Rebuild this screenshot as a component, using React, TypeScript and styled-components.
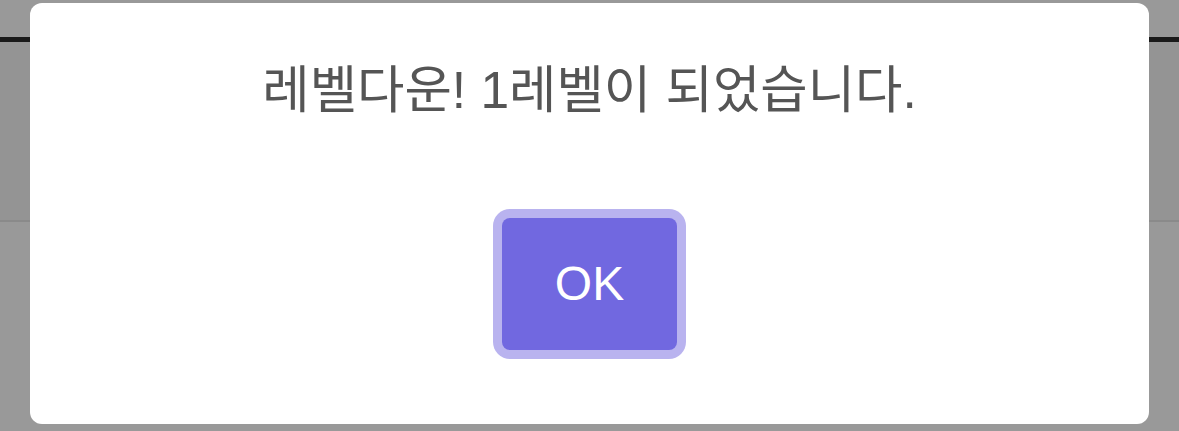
import React from 'react';
import styled, { createGlobalStyle } from 'styled-components';

const GlobalStyle = createGlobalStyle`
  html, body {
    margin: 0;
    padding: 0;
    background: #ffffff;
  }
  body {
    font-family: "Liberation Sans", "Noto Sans CJK KR", sans-serif;
  }
`;

const Page = styled.div`
  width: 1179px;
  height: 431px;
  display: flex;
  flex-direction: column;
  background: #ffffff;
  overflow: hidden;
`;

const Header = styled.header`
  height: 37px;
  flex-shrink: 0;
  background: #ffffff;
  border-bottom: 5px solid #2c2c2c;
`;

const Section = styled.section`
  height: 178px;
  flex-shrink: 0;
  background: #f7f7f7;
  border-bottom: 2px solid #e6e6e6;
`;

const Backdrop = styled.div`
  position: fixed;
  inset: 0;
  background: rgba(0, 0, 0, 0.4);
  display: flex;
  justify-content: center;
  align-items: flex-start;
  padding-top: 3px;
`;

const Modal = styled.div`
  width: 1119px;
  height: 421px;
  box-sizing: border-box;
  background: #ffffff;
  border-radius: 12px;
  display: flex;
  flex-direction: column;
  align-items: center;
  padding-top: 58px;
`;

const Title = styled.h2`
  margin: 0;
  font-size: 51.5px;
  line-height: 58px;
  font-weight: 400;
  color: #555555;
  text-align: center;
`;

const Actions = styled.div`
  margin-top: 99px;
  display: flex;
  justify-content: center;
`;

const ConfirmButton = styled.button`
  font-family: "Liberation Sans", sans-serif;
  font-size: 48px;
  line-height: 58px;
  color: #ffffff;
  background: #7168e0;
  border: none;
  border-radius: 8px;
  padding: 37px 53px;
  box-shadow: 0 0 0 9px rgba(115, 103, 224, 0.5);
  cursor: pointer;
  outline: none;
`;

export default function App() {
  return (
    <>
      <GlobalStyle />
      <Page>
        <Header />
        <Section />
      </Page>
      <Backdrop>
        <Modal role="dialog">
          <Title>레벨다운! 1레벨이 되었습니다.</Title>
          <Actions>
            <ConfirmButton>OK</ConfirmButton>
          </Actions>
        </Modal>
      </Backdrop>
    </>
  );
}
